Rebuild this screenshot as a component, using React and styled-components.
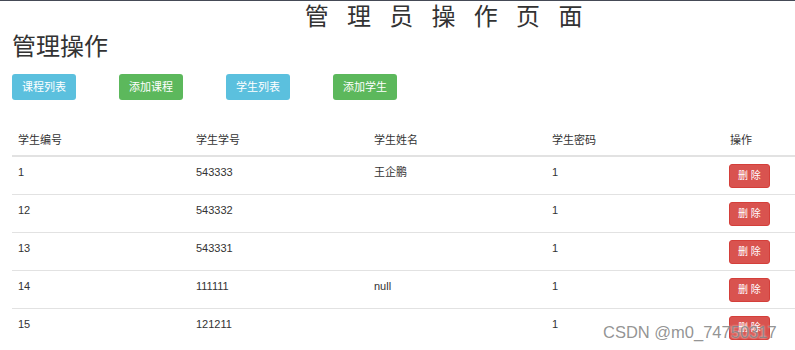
import styled, { createGlobalStyle } from "styled-components";

const GlobalStyle = createGlobalStyle`
  html, body {
    margin: 0;
    padding: 0;
    overflow: hidden;
    background: #ffffff;
  }
  body {
    font-family: "Liberation Sans", "Noto Sans CJK SC", sans-serif;
    color: #333333;
  }
`;

const colors = {
  info: "#5bc0de",
  success: "#5cb85c",
  danger: "#d9534f",
};

const Page = styled.div`
  position: relative;
  width: 795px;
  height: 350px;
  overflow: hidden;
  border-top: 1px solid #454a56;
  box-sizing: border-box;
`;

const PageTitle = styled.h1`
  margin: 0;
  padding-left: 98px;
  text-align: center;
  font-size: 24px;
  line-height: 32px;
  font-weight: 400;
  letter-spacing: 5.8px;
  color: #333;
`;

const Content = styled.div`
  padding: 0 12px;
`;

const Heading = styled.h3`
  margin: 0;
  font-size: 24px;
  line-height: 28px;
  font-weight: 400;
  color: #333;
`;

const Toolbar = styled.div`
  display: flex;
  gap: 43px;
  margin-top: 13px;
`;

const ActionButton = styled.button`
  height: 26px;
  padding: 0 9px;
  border: 1px solid transparent;
  border-radius: 3px;
  background: ${(p) => colors[p.$variant]};
  color: #ffffff;
  font-family: inherit;
  font-size: 11px;
  line-height: 16px;
  cursor: pointer;
`;

const Table = styled.table`
  margin-top: 25px;
  width: 890px;
  table-layout: fixed;
  border-collapse: collapse;
  font-size: 11px;
  line-height: 16px;
`;

const Th = styled.th`
  width: 166px;
  padding: 7px 6px;
  text-align: left;
  font-weight: 400;
  border-bottom: 2px solid #e2e2e2;
`;

const Row = styled.tr`
  & + & td {
    border-top: 1px solid #e2e2e2;
  }
`;

const Td = styled.td`
  padding: 6.5px 6px;
  vertical-align: top;
`;

const DeleteButton = styled.button`
  display: block;
  height: 24px;
  padding: 0 8px;
  margin-left: -1px;
  border: 1px solid #d43f3a;
  border-radius: 3px;
  background: ${colors.danger};
  color: #ffffff;
  font-family: inherit;
  font-size: 10px;
  line-height: 14px;
  cursor: pointer;
`;

const Watermark = styled.div`
  position: absolute;
  z-index: 1;
  left: 603px;
  top: 321px;
  font-family: "Liberation Sans", sans-serif;
  font-size: 16.5px;
  line-height: 20px;
  color: rgba(120, 120, 120, 0.8);
  text-shadow: 0 0 2px rgba(255, 255, 255, 0.9);
  white-space: nowrap;
  pointer-events: none;
`;

const students = [
  { id: 1, no: "543333", name: "王企鹏", pwd: "1" },
  { id: 12, no: "543332", name: "", pwd: "1" },
  { id: 13, no: "543331", name: "", pwd: "1" },
  { id: 14, no: "111111", name: "null", pwd: "1" },
  { id: 15, no: "121211", name: "", pwd: "1" },
];

const actions = [
  { label: "课程列表", variant: "info" },
  { label: "添加课程", variant: "success" },
  { label: "学生列表", variant: "info" },
  { label: "添加学生", variant: "success" },
];

const App = () => {
  return (
    <>
      <GlobalStyle />
      <Page>
        <PageTitle>管 理 员 操 作 页 面</PageTitle>
        <Content>
          <Heading>管理操作</Heading>
          <Toolbar>
            {actions.map((a) => (
              <ActionButton key={a.label} $variant={a.variant}>
                {a.label}
              </ActionButton>
            ))}
          </Toolbar>
          <Table>
            <thead>
              <tr>
                <Th>学生编号</Th>
                <Th>学生学号</Th>
                <Th>学生姓名</Th>
                <Th>学生密码</Th>
                <Th>操作</Th>
              </tr>
            </thead>
            <tbody>
              {students.map((s) => (
                <Row key={s.id}>
                  <Td>{s.id}</Td>
                  <Td>{s.no}</Td>
                  <Td>{s.name}</Td>
                  <Td>{s.pwd}</Td>
                  <Td>
                    <DeleteButton>删 除</DeleteButton>
                  </Td>
                </Row>
              ))}
            </tbody>
          </Table>
        </Content>
        <Watermark>CSDN @m0_74750317</Watermark>
      </Page>
    </>
  );
};

export default App;
